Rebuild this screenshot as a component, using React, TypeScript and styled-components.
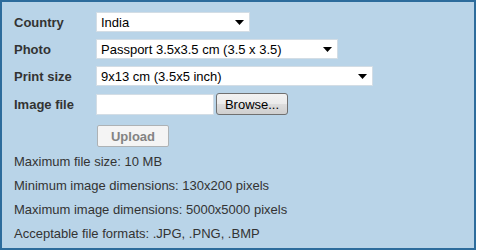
import React from "react";
import styled, { createGlobalStyle } from "styled-components";

const Global = createGlobalStyle`
  html, body { margin: 0; padding: 0; background: #ffffff; }
  body { font-family: "Liberation Sans", Arial, sans-serif; }
`;

const Panel = styled.div`
  box-sizing: border-box;
  width: 476px;
  height: 250px;
  border: 2px solid #2d6c9c;
  background: #b9d4e8;
  padding: 10px 0 0 12px;
  color: #333333;
`;

const Form = styled.div`
  display: grid;
  grid-template-columns: 82px auto;
  row-gap: 7px;
  align-items: center;
`;

const Label = styled.div`
  font-size: 13px;
  font-weight: bold;
  color: #333333;
  line-height: 16px;
  padding-top: 1px;
`;

const SelectBox = styled.div<{ $w: number }>`
  box-sizing: border-box;
  width: ${(p) => p.$w}px;
  height: 20px;
  background: #ffffff;
  border: 1px solid #d3dde5;
  display: flex;
  align-items: center;
  justify-content: space-between;
  padding: 0 5px 0 4px;
  font-size: 13px;
  color: #000000;
`;

const Arrow = styled.svg`
  width: 9px;
  height: 5px;
  flex: none;
`;

const FileRow = styled.div`
  display: flex;
  align-items: center;
  gap: 2px;
`;

const FileBox = styled.div`
  box-sizing: border-box;
  width: 118px;
  height: 21px;
  background: #ffffff;
  border: 1px solid #d3dde5;
`;

const BrowseButton = styled.button`
  box-sizing: border-box;
  width: 72px;
  height: 22px;
  border: 1px solid #707070;
  border-radius: 3px;
  background: linear-gradient(#f2f2f2 0%, #ebebeb 50%, #dddddd 51%, #cfcfcf 100%);
  font-family: "Liberation Sans", Arial, sans-serif;
  font-size: 13px;
  color: #000000;
  padding: 0;
`;

const UploadButton = styled.button`
  box-sizing: border-box;
  margin: 10px 0 0 83px;
  width: 72px;
  height: 22px;
  border: 1px solid #adb2b5;
  border-radius: 2px;
  background: #f4f4f4;
  font-family: "Liberation Sans", Arial, sans-serif;
  font-size: 13px;
  font-weight: bold;
  color: #838383;
  padding: 0;
  display: block;
`;

const Info = styled.div`
  margin-top: 3px;
  font-size: 13px;
  line-height: 24px;
  color: #333333;
`;

const Select = ({ value, width }: { value: string; width: number }) => (
  <SelectBox $w={width}>
    <span>{value}</span>
    <Arrow viewBox="0 0 9 5">
      <polygon points="0,0 9,0 4.5,5" fill="#000" />
    </Arrow>
  </SelectBox>
);

export default function App() {
  return (
    <>
      <Global />
      <Panel>
        <Form>
          <Label>Country</Label>
          <Select value="India" width={154} />
          <Label>Photo</Label>
          <Select value="Passport 3.5x3.5 cm (3.5 x 3.5)" width={242} />
          <Label>Print size</Label>
          <Select value="9x13 cm (3.5x5 inch)" width={277} />
          <Label>Image file</Label>
          <FileRow>
            <FileBox />
            <BrowseButton>Browse...</BrowseButton>
          </FileRow>
        </Form>
        <UploadButton disabled>Upload</UploadButton>
        <Info>
          <div>Maximum file size: 10 MB</div>
          <div>Minimum image dimensions: 130x200 pixels</div>
          <div>Maximum image dimensions: 5000x5000 pixels</div>
          <div>Acceptable file formats: .JPG, .PNG, .BMP</div>
        </Info>
      </Panel>
    </>
  );
}
